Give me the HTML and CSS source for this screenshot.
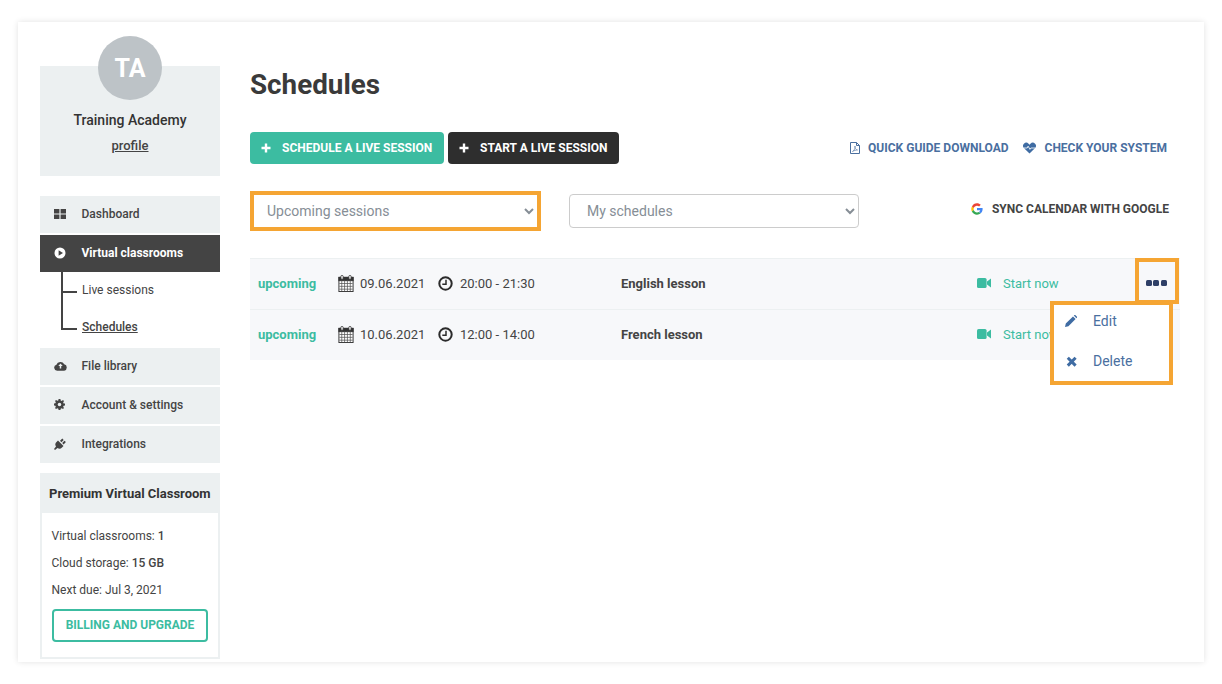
FILE: index.html
```html
<!DOCTYPE html>
<html lang="en">
<head>
<meta charset="utf-8">
<title>Schedules</title>
<link rel="stylesheet" href="styles.css">
</head>
<body>
<svg class="defs" width="0" height="0" aria-hidden="true">
  <symbol id="cal" viewBox="0 0 16 18">
    <rect x="0.5" y="2.5" width="15" height="15" fill="#fff" stroke="#333"/>
    <rect x="0.5" y="2.5" width="15" height="3.5" fill="#333" stroke="#333"/>
    <path d="M3.5 6v11M6.5 6v11M9.5 6v11M12.5 6v11M1 9h14M1 12h14M1 15h14" stroke="#555" stroke-width="0.8" fill="none"/>
    <rect x="2.6" y="0.5" width="2.4" height="4" rx="1" fill="#fff" stroke="#333" stroke-width="0.9"/>
    <rect x="11" y="0.5" width="2.4" height="4" rx="1" fill="#fff" stroke="#333" stroke-width="0.9"/>
  </symbol>
  <symbol id="clock" viewBox="0 0 15 15">
    <circle cx="7.5" cy="7.5" r="6.2" fill="none" stroke="#2b2b2b" stroke-width="2"/>
    <path d="M8 3.8v4.400H4.300" fill="none" stroke="#2b2b2b" stroke-width="1.5"/>
  </symbol>
  <symbol id="video" viewBox="0 0 14 10">
    <rect x="0" y="0" width="9.6" height="10" rx="1.6" fill="#3cbca1"/>
    <path d="M10 3.6 14 .6v8.800L10 6.400z" fill="#3cbca1"/>
  </symbol>
  <symbol id="plus" viewBox="0 0 10 10">
    <path d="M5 .5v9M.5 5h9" stroke="#fff" stroke-width="2.4" fill="none"/>
  </symbol>
</svg>

<div class="card">
  <aside class="sidebar">
    <section class="profile">
      <div class="avatar">TA</div>
      <div class="profile-name">Training Academy</div>
      <a class="profile-link">profile</a>
    </section>

    <nav class="nav">
      <a class="nav-item">
        <svg class="nav-icon" viewBox="0 0 12 10"><path d="M0 0h5.400v4.400H0zM6.600 0H12v4.400H6.600zM0 5.600h5.400V10H0zM6.600 5.600H12V10H6.600z" fill="#444"/></svg>
        <span>Dashboard</span>
      </a>
      <a class="nav-item nav-active">
        <svg class="nav-icon" viewBox="0 0 12 12"><circle cx="6" cy="6" r="5.5" fill="#fff"/><path d="M4.600 3.300v5.400L9 6z" fill="#444"/></svg>
        <span>Virtual classrooms</span>
      </a>
      <div class="subnav">
        <a class="subnav-item"><span>Live sessions</span></a>
        <a class="subnav-item subnav-current"><span>Schedules</span></a>
      </div>
      <a class="nav-item">
        <svg class="nav-icon nav-icon-wide" viewBox="0 0 14 10"><path d="M3.400 10A3.200 3.200 0 0 1 2.600 3.700 4.600 4.600 0 0 1 11 3a3.600 3.600 0 0 1 0 7z" fill="#444"/><path d="M7 2.200 4.600 5h1.600v2.600h1.600V5h1.600z" fill="#ecf0f1"/></svg>
        <span>File library</span>
      </a>
      <a class="nav-item">
        <svg class="nav-icon nav-icon-gear" viewBox="0 0 12 12"><path d="M5 0h2l.3 1.600 1.100.5L9.800 1.200l1.100 1.100-.9 1.400.5 1.100L12 5v2l-1.500.3-.5 1.100.9 1.400-1.100 1.100-1.400-.9-1.100.5L7 12H5l-.3-1.500-1.100-.5-1.400.9-1.100-1.100.9-1.400-.5-1.100L0 7V5l1.500-.3.5-1.100-.9-1.400 1.100-1.100 1.400.9 1.100-.5z" fill="#444"/><circle cx="6" cy="6" r="1.900" fill="#ecf0f1"/></svg>
        <span>Account &amp; settings</span>
      </a>
      <a class="nav-item">
        <svg class="nav-icon" viewBox="0 0 12 12"><path d="M4 2.500 9.500 8 8 9.500a3.500 3.500 0 0 1-4.500.5L1 12 0 11l2-2.500A3.500 3.500 0 0 1 2.500 4zM6 2.800 8.300.5l1.400 1.400-2.300 2.300zM8.200 5l2.300-2.300 1.400 1.400-2.300 2.300z" fill="#444"/></svg>
        <span>Integrations</span>
      </a>
    </nav>

    <section class="plan">
      <h2 class="plan-title">Premium Virtual Classroom</h2>
      <div class="plan-body">
        <p class="plan-line">Virtual classrooms: <b>1</b></p>
        <p class="plan-line">Cloud storage: <b>15 GB</b></p>
        <p class="plan-line">Next due: Jul 3, 2021</p>
        <a class="plan-btn">BILLING AND UPGRADE</a>
      </div>
    </section>
  </aside>

  <main class="main">
    <h1 class="title">Schedules</h1>

    <div class="toolbar">
      <a class="btn btn-green"><svg class="btn-icon"><use href="#plus"/></svg>SCHEDULE A LIVE SESSION</a>
      <a class="btn btn-dark"><svg class="btn-icon"><use href="#plus"/></svg>START A LIVE SESSION</a>
      <div class="toolbar-links">
        <a class="tool-link">
          <svg class="pdf-icon" viewBox="0 0 10 12"><path d="M.5.500h6l3 3v8h-9z M6.500.500v3h3" fill="none" stroke="#4a6f9f"/><path d="M2.500 9.500c2-1 3-4 2.500-5.500-.6 1.500 1 4 2.500 4-1.500 0-3.500.5-5 1.500z" fill="none" stroke="#4a6f9f" stroke-width=".6"/></svg>
          QUICK GUIDE DOWNLOAD
        </a>
        <a class="tool-link">
          <svg class="heart-icon" viewBox="0 0 14 12"><path d="M7 12 1.200 6.300A3.500 3.500 0 0 1 1 1.400a3.500 3.500 0 0 1 5 0l1 1 1-1a3.500 3.500 0 0 1 5 0 3.500 3.500 0 0 1-.2 4.900z" fill="#3f6ca3"/><path d="M1 6h3.500l1-2 2 3.500 1-1.500H13" fill="none" stroke="#fff" stroke-width=".9"/></svg>
          CHECK YOUR SYSTEM
        </a>
      </div>
    </div>

    <div class="filters">
      <div class="highlight highlight-select">
        <select class="select select-in"><option>Upcoming sessions</option></select>
      </div>
      <select class="select select-plain"><option>My schedules</option></select>
      <a class="sync">
        <svg class="g-icon" viewBox="0 0 48 48"><path fill="#FFC107" d="M10.500 24c0-1.600.3-3 .8-4.400L3.700 13.700A23.900 23.900 0 0 0 1 24c0 3.700.9 7.200 2.400 10.300l7.700-6c-.4-1.300-.6-2.800-.6-4.300z"/><path fill="#EA4335" d="M24 10.500c3.300 0 6.200 1.200 8.500 3.100l6.600-6.600C35 3.400 29.800 1 24 1 15 1 7.300 6.100 3.700 13.700l7.600 5.900c1.800-5.300 6.800-9.100 12.700-9.100z"/><path fill="#34A853" d="M24 37.500c-5.900 0-10.900-3.800-12.900-9.200l-7.700 6C7.200 41.900 15 47 24 47c5.600 0 11-2 15-5.700l-7.300-5.700c-2.100 1.300-4.700 1.900-7.700 1.900z"/><path fill="#4285F4" d="M46.500 24c0-1.400-.2-2.900-.5-4.200H24v8.900h12.900c-.6 3.100-2.400 5.500-5.200 6.900l7.300 5.700C43.300 37.300 46.500 31.400 46.500 24z"/></svg>
        SYNC CALENDAR WITH GOOGLE
      </a>
    </div>

    <div class="schedule">
      <div class="row">
        <span class="status">upcoming</span>
        <span class="when">
          <svg class="cal-icon"><use href="#cal"/></svg><span class="date">09.06.2021</span>
          <svg class="clock-icon"><use href="#clock"/></svg><span>20:00 - 21:30</span>
        </span>
        <span class="lesson">English lesson</span>
        <a class="start"><svg class="video-icon"><use href="#video"/></svg>Start now</a>
      </div>
      <div class="row row-last">
        <span class="status">upcoming</span>
        <span class="when">
          <svg class="cal-icon"><use href="#cal"/></svg><span class="date">10.06.2021</span>
          <svg class="clock-icon"><use href="#clock"/></svg><span>12:00 - 14:00</span>
        </span>
        <span class="lesson">French lesson</span>
        <a class="start"><svg class="video-icon"><use href="#video"/></svg>Start now</a>
      </div>

      <div class="more">
        <span class="dot"></span><span class="dot"></span><span class="dot"></span>
      </div>
      <div class="menu">
        <a class="menu-item">
          <svg class="menu-icon" viewBox="0 0 12 12"><path d="M0 12l.8-3.400L8 1.400 10.600 4 3.400 11.200zM8.800.6l.4-.4a1 1 0 0 1 1.300 0l1.300 1.300a1 1 0 0 1 0 1.300l-.4.400z" fill="#3f6ca3"/></svg>
          Edit
        </a>
        <a class="menu-item">
          <svg class="menu-icon" viewBox="0 0 12 12"><path d="M2.800 2.800l7.800 7.800M10.600 2.800l-7.800 7.800" stroke="#3f6ca3" stroke-width="3" fill="none"/></svg>
          Delete
        </a>
      </div>
    </div>
  </main>
</div>
</body>
</html>
```

FILE: styles.css
```css
* { box-sizing: border-box; }

html, body { margin: 0; padding: 0; }

body {
  width: 1222px;
  height: 684px;
  padding: 22px 18px;
  background: #fff;
  font-family: Roboto, "Liberation Sans", sans-serif;
  font-size: 12px;
  color: #444;
  overflow: hidden;
}

.defs { position: absolute; }

a { color: inherit; text-decoration: none; }

.card {
  display: flex;
  width: 1186px;
  height: 640px;
  padding: 0 24px 0 22px;
  background: #fff;
  box-shadow: 0 0 6px rgba(0, 0, 0, 0.12);
}

/* Sidebar */
.sidebar {
  flex: 0 0 180px;
  padding-top: 14px;
}

.profile {
  position: relative;
  height: 110px;
  margin-top: 30px;
  padding-top: 44px;
  background: #ecf0f1;
  text-align: center;
}

.avatar {
  position: absolute;
  top: -30px;
  left: 58px;
  width: 64px;
  height: 64px;
  border-radius: 50%;
  background: #bdc3c7;
  color: #fff;
  font-size: 25px;
  font-weight: 700;
  line-height: 66px;
}

.profile-name {
  color: #333;
  font-size: 14px;
  font-weight: 500;
  line-height: 20px;
}

.profile-link {
  display: block;
  margin-top: 7px;
  font-size: 13px;
  font-weight: 500;
  line-height: 18px;
  text-decoration: underline;
}

.nav {
  display: flex;
  flex-direction: column;
  gap: 2px;
  margin-top: 20px;
}

.nav-item {
  display: flex;
  align-items: center;
  height: 37px;
  padding: 0 0 2px 14px;
  background: #ecf0f1;
  font-weight: 500;
  color: #444;
}

.nav-icon {
  flex: 0 0 12px;
  width: 12px;
  height: 12px;
  margin-right: 15.5px;
}

.nav-icon-wide {
  flex-basis: 13px;
  width: 13px;
  margin-right: 14.5px;
}

.nav-icon-gear {
  flex-basis: 11px;
  width: 11px;
  height: 11px;
  margin-right: 16.5px;
}

.nav-active {
  background: #444;
  color: #fff;
  font-weight: 700;
}

.subnav {
  position: relative;
  display: flex;
  flex-direction: column;
  height: 74px;
  margin-top: -2px;
}

.subnav::before {
  content: "";
  position: absolute;
  left: 21px;
  top: 0;
  width: 2px;
  height: 58px;
  background: #444;
}

.subnav-item {
  display: flex;
  align-items: center;
  height: 37px;
  padding-left: 23px;
}

.subnav-item::before {
  content: "";
  flex: 0 0 14px;
  height: 2px;
  margin: 2px 5px 0 0;
  background: #444;
}

.subnav-item span { padding-bottom: 2px; }

.subnav-current { font-weight: 500; text-decoration: underline; }

.plan {
  height: 186px;
  margin-top: 10px;
  border: 2px solid #ecf0f1;
  border-top: 0;
}

.plan-title {
  height: 40px;
  margin: 0 -2px;
  padding-left: 9px;
  background: #ecf0f1;
  color: #333;
  font-size: 13px;
  font-weight: 700;
  line-height: 41px;
}

.plan-body { padding: 14px 10px 0 9.5px; }

.plan-line {
  margin: 0 0 9px;
  line-height: 18px;
}

.plan-line b { font-weight: 500; }

.plan-btn {
  display: block;
  height: 33px;
  margin: 10px 0 0 .5px;
  border: 2px solid #3cbca1;
  border-radius: 4px;
  color: #3cbca1;
  font-weight: 700;
  line-height: 29px;
  text-align: center;
}

/* Main */
.main {
  flex: 0 0 930px;
  margin-left: 30px;
  padding-top: 46px;
}

.title {
  margin: 0;
  color: #3a3a3a;
  font-size: 27.8px;
  font-weight: 700;
  line-height: 34px;
}

.toolbar {
  display: flex;
  align-items: center;
  gap: 4px;
  margin-top: 30px;
}

.btn {
  display: flex;
  align-items: center;
  height: 32px;
  padding: 0 11.5px 0 11px;
  border-radius: 4px;
  color: #fff;
  font-weight: 700;
  white-space: nowrap;
}

.btn-green { width: 194px; background: #3cbca1; }
.btn-dark { width: 171px; background: #2e2e2e; }

.btn-icon {
  flex: 0 0 10px;
  width: 10px;
  height: 10px;
  margin-right: 11px;
}

.toolbar-links {
  display: flex;
  align-items: center;
  margin-left: auto;
  padding-right: 13px;
}

.tool-link {
  display: flex;
  align-items: center;
  color: #4a6f9f;
  font-weight: 700;
}

.tool-link + .tool-link { margin-left: 14px; }

.pdf-icon { width: 10px; height: 12px; margin-right: 8px; }
.heart-icon { width: 13px; height: 12px; margin-right: 9px; }

.filters {
  display: flex;
  align-items: center;
  margin-top: 27px;
}

.highlight-select {
  width: 291px;
  height: 40px;
  border: 4px solid #f5a533;
}

.select {
  display: block;
  padding: 0 8px 0 9px;
  border: 1px solid #ccc;
  border-radius: 4px;
  background: #fff;
  color: #868e96;
  font-family: Roboto, "Liberation Sans", sans-serif;
  font-size: 14px;
}

.select-in {
  width: 100%;
  height: 100%;
  border: 0;
  border-radius: 0;
}

.select-plain {
  width: 290px;
  height: 34px;
  margin-left: 28px;
  padding-left: 13px;
}

.sync {
  display: flex;
  align-items: center;
  margin-left: auto;
  padding: 0 11px 4px 0;
  color: #444;
  font-weight: 700;
}

.g-icon { width: 12px; height: 12px; margin-right: 9px; }

.schedule {
  position: relative;
  margin-top: 27px;
  border-top: 1px solid #ecf0f1;
}

.row {
  display: flex;
  align-items: center;
  height: 51px;
  padding: 0 0 2px 8px;
  background: #f7f8fa;
  font-size: 13px;
  border-bottom: 1px solid #ecf0f1;
}

.row-last { height: 50px; border-bottom: 0; }

.status {
  flex: 0 0 80px;
  color: #3cbca1;
  font-weight: 700;
}

.when {
  display: flex;
  align-items: center;
  flex: 0 0 283px;
  color: #444;
}

.cal-icon { width: 16px; height: 17px; margin-right: 6px; }
.date { width: 78px; }
.clock-icon { width: 15px; height: 15px; margin-right: 7px; }

.lesson {
  flex: 0 0 356px;
  color: #444;
  font-weight: 700;
}

.start {
  display: flex;
  align-items: center;
  color: #3cbca1;
}

.video-icon { width: 14px; height: 10px; margin-right: 12px; }

.more {
  position: absolute;
  top: -1px;
  left: 885px;
  display: flex;
  align-items: center;
  justify-content: center;
  gap: 1.5px;
  width: 44px;
  height: 46px;
  padding: 4px 2px 0 0;
  border: 4px solid #f5a533;
}

.dot {
  width: 6px;
  height: 6px;
  border-radius: 1.5px;
  background: #2e3f66;
}

.menu {
  position: absolute;
  top: 42px;
  left: 800px;
  display: flex;
  flex-direction: column;
  gap: 8px;
  width: 123px;
  height: 84px;
  border: 4px solid #f5a533;
  background: #fff;
}

.menu-item {
  display: flex;
  align-items: center;
  height: 32px;
  padding-left: 11px;
  color: #4a6f9f;
  font-size: 14px;
}

.menu-icon {
  width: 12px;
  height: 12px;
  margin-right: 16px;
}
```
